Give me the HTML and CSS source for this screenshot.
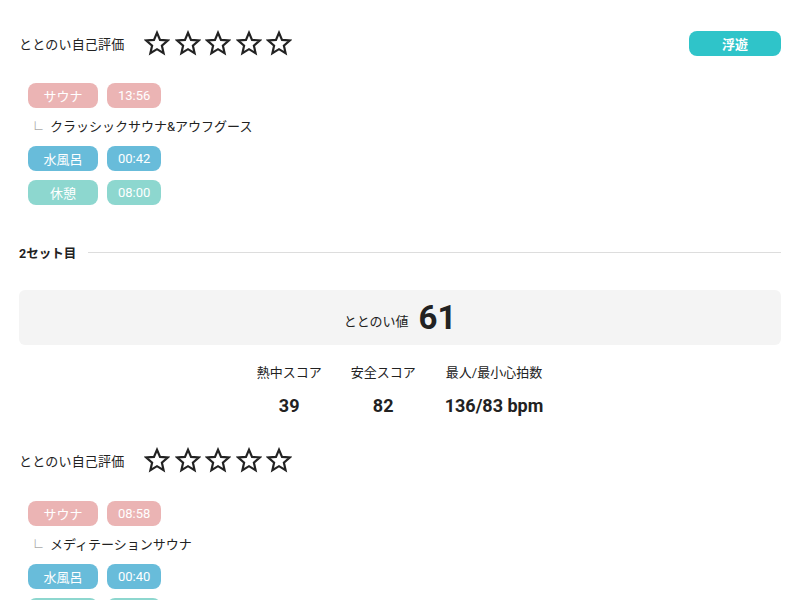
FILE: index.html
```html
<!DOCTYPE html>
<html lang="ja">
<head>
<meta charset="utf-8">
<link rel="stylesheet" href="styles.css">
</head>
<body>
<div class="page">
  <div class="rating-row">
    <span class="rating-label">ととのい自己評価</span>
    <div class="stars">
      <svg class="star" viewBox="0 0 24 24"><path d="M12 2.5l2.8 6.6 7.1.6-5.4 4.7 1.6 7-6.1-3.7-6.1 3.7 1.6-7-5.4-4.7 7.1-.6z"/></svg>
      <svg class="star" viewBox="0 0 24 24"><path d="M12 2.5l2.8 6.6 7.1.6-5.4 4.7 1.6 7-6.1-3.7-6.1 3.7 1.6-7-5.4-4.7 7.1-.6z"/></svg>
      <svg class="star" viewBox="0 0 24 24"><path d="M12 2.5l2.8 6.6 7.1.6-5.4 4.7 1.6 7-6.1-3.7-6.1 3.7 1.6-7-5.4-4.7 7.1-.6z"/></svg>
      <svg class="star" viewBox="0 0 24 24"><path d="M12 2.5l2.8 6.6 7.1.6-5.4 4.7 1.6 7-6.1-3.7-6.1 3.7 1.6-7-5.4-4.7 7.1-.6z"/></svg>
      <svg class="star" viewBox="0 0 24 24"><path d="M12 2.5l2.8 6.6 7.1.6-5.4 4.7 1.6 7-6.1-3.7-6.1 3.7 1.6-7-5.4-4.7 7.1-.6z"/></svg>
    </div>
    <span class="badge">浮遊</span>
  </div>

  <div class="steps">
    <div class="step"><span class="pill name sauna">サウナ</span><span class="pill sauna">13:56</span></div>
    <div class="sub"><span class="corner">∟</span>クラッシックサウナ&amp;アウフグース</div>
    <div class="step"><span class="pill name water">水風呂</span><span class="pill water">00:42</span></div>
    <div class="step"><span class="pill name rest">休憩</span><span class="pill rest">08:00</span></div>
  </div>

  <div class="set-head"><span class="set-title">2セット目</span><span class="set-line"></span></div>

  <div class="score-box"><span class="score-label">ととのい値</span><span class="score-value">61</span></div>

  <div class="stats">
    <div class="stat"><div class="stat-label">熱中スコア</div><div class="stat-value">39</div></div>
    <div class="stat"><div class="stat-label">安全スコア</div><div class="stat-value">82</div></div>
    <div class="stat"><div class="stat-label">最人/最小心拍数</div><div class="stat-value">136/83 bpm</div></div>
  </div>

  <div class="rating-row second">
    <span class="rating-label">ととのい自己評価</span>
    <div class="stars">
      <svg class="star" viewBox="0 0 24 24"><path d="M12 2.5l2.8 6.6 7.1.6-5.4 4.7 1.6 7-6.1-3.7-6.1 3.7 1.6-7-5.4-4.7 7.1-.6z"/></svg>
      <svg class="star" viewBox="0 0 24 24"><path d="M12 2.5l2.8 6.6 7.1.6-5.4 4.7 1.6 7-6.1-3.7-6.1 3.7 1.6-7-5.4-4.7 7.1-.6z"/></svg>
      <svg class="star" viewBox="0 0 24 24"><path d="M12 2.5l2.8 6.6 7.1.6-5.4 4.7 1.6 7-6.1-3.7-6.1 3.7 1.6-7-5.4-4.7 7.1-.6z"/></svg>
      <svg class="star" viewBox="0 0 24 24"><path d="M12 2.5l2.8 6.6 7.1.6-5.4 4.7 1.6 7-6.1-3.7-6.1 3.7 1.6-7-5.4-4.7 7.1-.6z"/></svg>
      <svg class="star" viewBox="0 0 24 24"><path d="M12 2.5l2.8 6.6 7.1.6-5.4 4.7 1.6 7-6.1-3.7-6.1 3.7 1.6-7-5.4-4.7 7.1-.6z"/></svg>
    </div>
  </div>

  <div class="steps second-steps">
    <div class="step"><span class="pill name sauna">サウナ</span><span class="pill sauna">08:58</span></div>
    <div class="sub"><span class="corner">∟</span>メディテーションサウナ</div>
    <div class="step"><span class="pill name water">水風呂</span><span class="pill water">00:40</span></div>
    <div class="step"><span class="pill name rest">休憩</span><span class="pill rest">08:00</span></div>
  </div>
</div>
</body>
</html>
```

FILE: styles.css
```css
* { box-sizing: border-box; }
html, body { margin: 0; padding: 0; background: #fff; }
body {
  font-family: Roboto, "Noto Sans CJK JP", sans-serif;
  color: #222;
  overflow: hidden;
  height: 600px;
}
.page { padding: 28px 19px 0; }

.rating-row {
  display: flex;
  align-items: center;
  height: 30px;
}
.rating-row.second { margin-top: 28px; }
.rating-label { font-size: 13px; width: 125px; letter-spacing: 0.2px; }
.stars { display: flex; gap: 4.5px; }
.star { width: 26px; height: 26px; }
.star path { fill: none; stroke: #222; stroke-width: 2; stroke-linejoin: miter; }
.badge {
  margin-left: auto;
  width: 92px;
  height: 25px;
  border-radius: 8px;
  background: #2fc4c9;
  color: #fff;
  font-weight: 700;
  font-size: 13px;
  display: flex;
  align-items: center;
  justify-content: center;
}

.steps {
  margin: 25px 0 0 9px;
  display: flex;
  flex-direction: column;
  gap: 9px;
}
.second-steps { margin-top: 26px; }
.step { display: flex; gap: 9px; }
.pill {
  height: 25px;
  border-radius: 8px;
  color: #fff;
  font-size: 13px;
  padding: 0 11px;
  display: flex;
  align-items: center;
  justify-content: center;
}
.pill.name { width: 70px; padding: 0; }
.sauna { background: #ebb4b4; }
.water { background: #68bcda; }
.rest { background: #8dd7cf; }
.sub {
  height: 20px;
  font-size: 13px;
  display: flex;
  align-items: center;
  padding: 0 0 4px 5px;
}
.corner { color: #aaa; font-size: 11px; width: 17px; }

.set-head {
  margin-top: 38px;
  height: 18px;
  display: flex;
  align-items: center;
  gap: 12px;
}
.set-title { font-size: 12.5px; font-weight: 700; }
.set-line { flex: 1; height: 1px; background: #ddd; }

.score-box {
  margin-top: 29px;
  height: 55px;
  background: #f4f4f4;
  border-radius: 6px;
  display: flex;
  align-items: center;
  justify-content: center;
  gap: 10px;
}
.score-label { font-size: 13px; padding-top: 6px; }
.score-value { font-size: 33px; font-weight: 700; }

.stats {
  margin-top: 19px;
  display: flex;
  justify-content: center;
  gap: 29px;
}
.stat { display: flex; flex-direction: column; align-items: center; gap: 13px; }
.stat-label { font-size: 13px; line-height: 18px; }
.stat-value { font-size: 18px; font-weight: 700; line-height: 22px; }
```
